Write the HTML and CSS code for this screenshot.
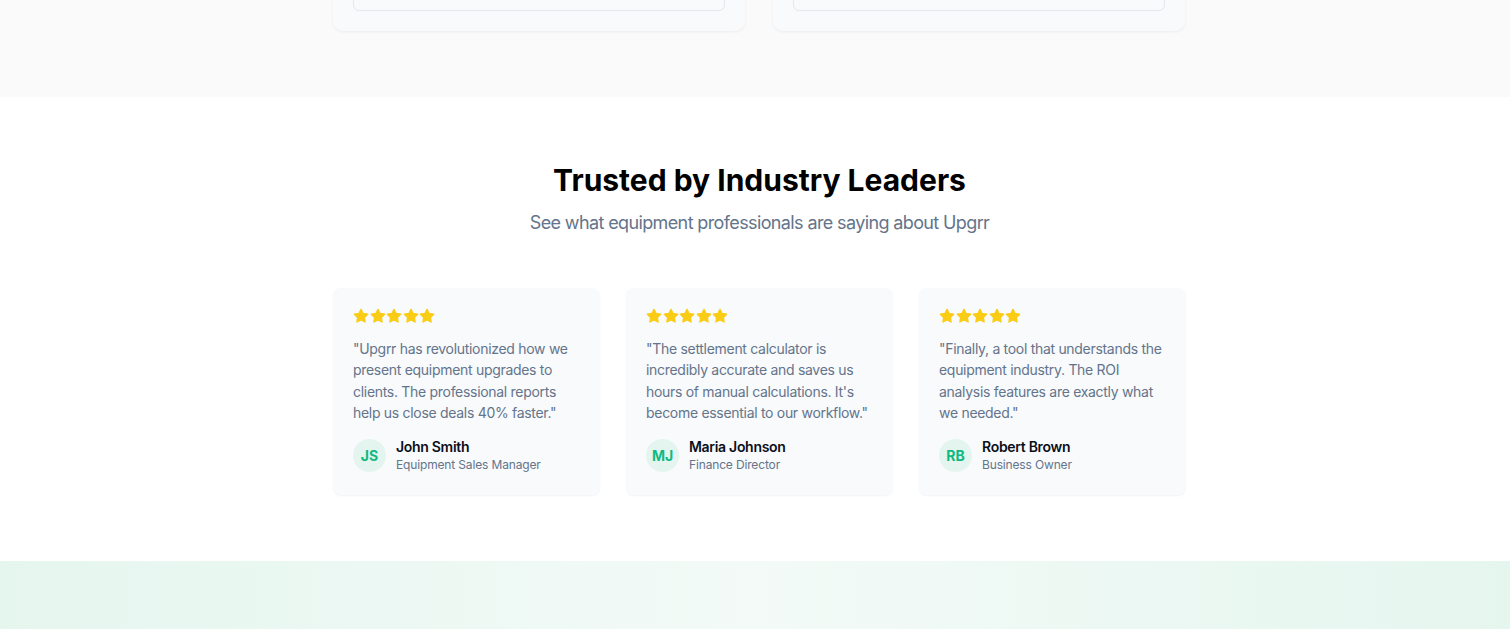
FILE: index.html
```html
<!DOCTYPE html>
<html lang="en">
<head>
<meta charset="utf-8">
<title>Upgrr – Testimonials</title>
<link rel="stylesheet" href="styles.css">
</head>
<body>
<section class="features">
  <div class="container feature-grid">
    <div class="feature-card"><div class="feature-inner"></div></div>
    <div class="feature-card"><div class="feature-inner"></div></div>
  </div>
</section>

<section class="testimonials">
  <div class="container">
    <h2 class="title">Trusted by Industry Leaders</h2>
    <p class="subtitle">See what equipment professionals are saying about Upgrr</p>
    <div class="cards">
      <div class="card">
        <div class="stars">
          <svg viewBox="0 0 24 24"><path d="M12 2l3.09 6.26L22 9.27l-5 4.87 1.18 6.88L12 17.77l-6.18 3.25L7 14.14 2 9.27l6.91-1.01L12 2z"/></svg>
          <svg viewBox="0 0 24 24"><path d="M12 2l3.09 6.26L22 9.27l-5 4.87 1.18 6.88L12 17.77l-6.18 3.25L7 14.14 2 9.27l6.91-1.01L12 2z"/></svg>
          <svg viewBox="0 0 24 24"><path d="M12 2l3.09 6.26L22 9.27l-5 4.87 1.18 6.88L12 17.77l-6.18 3.25L7 14.14 2 9.27l6.91-1.01L12 2z"/></svg>
          <svg viewBox="0 0 24 24"><path d="M12 2l3.09 6.26L22 9.27l-5 4.87 1.18 6.88L12 17.77l-6.18 3.25L7 14.14 2 9.27l6.91-1.01L12 2z"/></svg>
          <svg viewBox="0 0 24 24"><path d="M12 2l3.09 6.26L22 9.27l-5 4.87 1.18 6.88L12 17.77l-6.18 3.25L7 14.14 2 9.27l6.91-1.01L12 2z"/></svg>
        </div>
        <p class="quote">"Upgrr has revolutionized how we present equipment upgrades to clients. The professional reports help us close deals 40% faster."</p>
        <div class="author">
          <div class="avatar">JS</div>
          <div class="who">
            <div class="name">John Smith</div>
            <div class="role">Equipment Sales Manager</div>
          </div>
        </div>
      </div>
      <div class="card">
        <div class="stars">
          <svg viewBox="0 0 24 24"><path d="M12 2l3.09 6.26L22 9.27l-5 4.87 1.18 6.88L12 17.77l-6.18 3.25L7 14.14 2 9.27l6.91-1.01L12 2z"/></svg>
          <svg viewBox="0 0 24 24"><path d="M12 2l3.09 6.26L22 9.27l-5 4.87 1.18 6.88L12 17.77l-6.18 3.25L7 14.14 2 9.27l6.91-1.01L12 2z"/></svg>
          <svg viewBox="0 0 24 24"><path d="M12 2l3.09 6.26L22 9.27l-5 4.87 1.18 6.88L12 17.77l-6.18 3.25L7 14.14 2 9.27l6.91-1.01L12 2z"/></svg>
          <svg viewBox="0 0 24 24"><path d="M12 2l3.09 6.26L22 9.27l-5 4.87 1.18 6.88L12 17.77l-6.18 3.25L7 14.14 2 9.27l6.91-1.01L12 2z"/></svg>
          <svg viewBox="0 0 24 24"><path d="M12 2l3.09 6.26L22 9.27l-5 4.87 1.18 6.88L12 17.77l-6.18 3.25L7 14.14 2 9.27l6.91-1.01L12 2z"/></svg>
        </div>
        <p class="quote">"The settlement calculator is incredibly accurate and saves us hours of manual calculations. It's become essential to our workflow."</p>
        <div class="author">
          <div class="avatar">MJ</div>
          <div class="who">
            <div class="name">Maria Johnson</div>
            <div class="role">Finance Director</div>
          </div>
        </div>
      </div>
      <div class="card">
        <div class="stars">
          <svg viewBox="0 0 24 24"><path d="M12 2l3.09 6.26L22 9.27l-5 4.87 1.18 6.88L12 17.77l-6.18 3.25L7 14.14 2 9.27l6.91-1.01L12 2z"/></svg>
          <svg viewBox="0 0 24 24"><path d="M12 2l3.09 6.26L22 9.27l-5 4.87 1.18 6.88L12 17.77l-6.18 3.25L7 14.14 2 9.27l6.91-1.01L12 2z"/></svg>
          <svg viewBox="0 0 24 24"><path d="M12 2l3.09 6.26L22 9.27l-5 4.87 1.18 6.88L12 17.77l-6.18 3.25L7 14.14 2 9.27l6.91-1.01L12 2z"/></svg>
          <svg viewBox="0 0 24 24"><path d="M12 2l3.09 6.26L22 9.27l-5 4.87 1.18 6.88L12 17.77l-6.18 3.25L7 14.14 2 9.27l6.91-1.01L12 2z"/></svg>
          <svg viewBox="0 0 24 24"><path d="M12 2l3.09 6.26L22 9.27l-5 4.87 1.18 6.88L12 17.77l-6.18 3.25L7 14.14 2 9.27l6.91-1.01L12 2z"/></svg>
        </div>
        <p class="quote">"Finally, a tool that understands the equipment industry. The ROI analysis features are exactly what we needed."</p>
        <div class="author">
          <div class="avatar">RB</div>
          <div class="who">
            <div class="name">Robert Brown</div>
            <div class="role">Business Owner</div>
          </div>
        </div>
      </div>
    </div>
  </div>
</section>

<section class="cta"></section>
</body>
</html>
```

FILE: styles.css
```css
* { box-sizing: border-box; }

html, body {
  margin: 0;
  padding: 0;
}

body {
  font-family: Inter, "Noto Sans", "Liberation Sans", sans-serif;
  background: #ffffff;
  color: #0f172a;
  overflow: hidden;
}

.container {
  width: 853px;
  margin: 0 auto;
}

/* top (cut-off) section */
.features {
  height: 97px;
  overflow: hidden;
  background: #fafafa;
  padding-left: 9px;
  display: flex;
  flex-direction: column;
  justify-content: flex-end;
  padding-bottom: 66px;
}

.feature-grid {
  display: grid;
  grid-template-columns: 412px 412px;
  column-gap: 28px;
}

.feature-card {
  background: #f8fafc;
  border-radius: 10px;
  box-shadow: 0 1px 3px rgba(15, 23, 42, 0.06);
  padding: 20px 20px 20px;
}

.feature-inner {
  height: 160px;
  border: 1px solid #e4e7ec;
  border-radius: 6px;
  background: #f8fafc;
}

/* testimonials */
.testimonials {
  background: #ffffff;
  padding: 65px 0 66px 9px;
}

.title {
  margin: 0;
  text-align: center;
  font-size: 30px;
  line-height: 36px;
  font-weight: 700;
  color: #000000;
}

.subtitle {
  margin: 11px 0 0;
  text-align: center;
  font-size: 18px;
  line-height: 28px;
  color: #64748b;
  letter-spacing: -0.62px;
}

.cards {
  margin-top: 51px;
  display: grid;
  grid-template-columns: repeat(3, 1fr);
  column-gap: 26px;
}

.card {
  background: #f8fafc;
  border-radius: 8px;
  box-shadow: 0 1px 2px rgba(15, 23, 42, 0.05);
  padding: 20px 20px 22px;
}

.stars {
  display: flex;
  gap: 0.5px;
  height: 16px;
}

.stars svg {
  width: 16px;
  height: 16px;
  fill: #facc15;
  stroke: #facc15;
  stroke-width: 2;
  stroke-linejoin: round;
}

.quote {
  margin: 14px 0 0;
  font-size: 14px;
  line-height: 21.33px;
  color: #64748b;
  letter-spacing: -0.3px;
}

.author {
  margin-top: 14px;
  display: flex;
  align-items: center;
  gap: 10px;
}

.avatar {
  width: 33px;
  height: 33px;
  border-radius: 50%;
  background: #e3f5ee;
  color: #10b981;
  font-size: 14px;
  font-weight: 700;
  display: flex;
  align-items: center;
  justify-content: center;
  flex-shrink: 0;
}

.name {
  font-size: 14px;
  line-height: 20px;
  font-weight: 600;
  color: #0b0f19;
  letter-spacing: -0.3px;
}

.role {
  font-size: 12px;
  line-height: 16px;
  color: #64748b;
  letter-spacing: -0.15px;
}

/* bottom CTA band */
.cta {
  height: 68px;
  background: linear-gradient(90deg, #e5f6ef 0%, #f3faf7 50%, #e5f6ef 100%);
}
```
